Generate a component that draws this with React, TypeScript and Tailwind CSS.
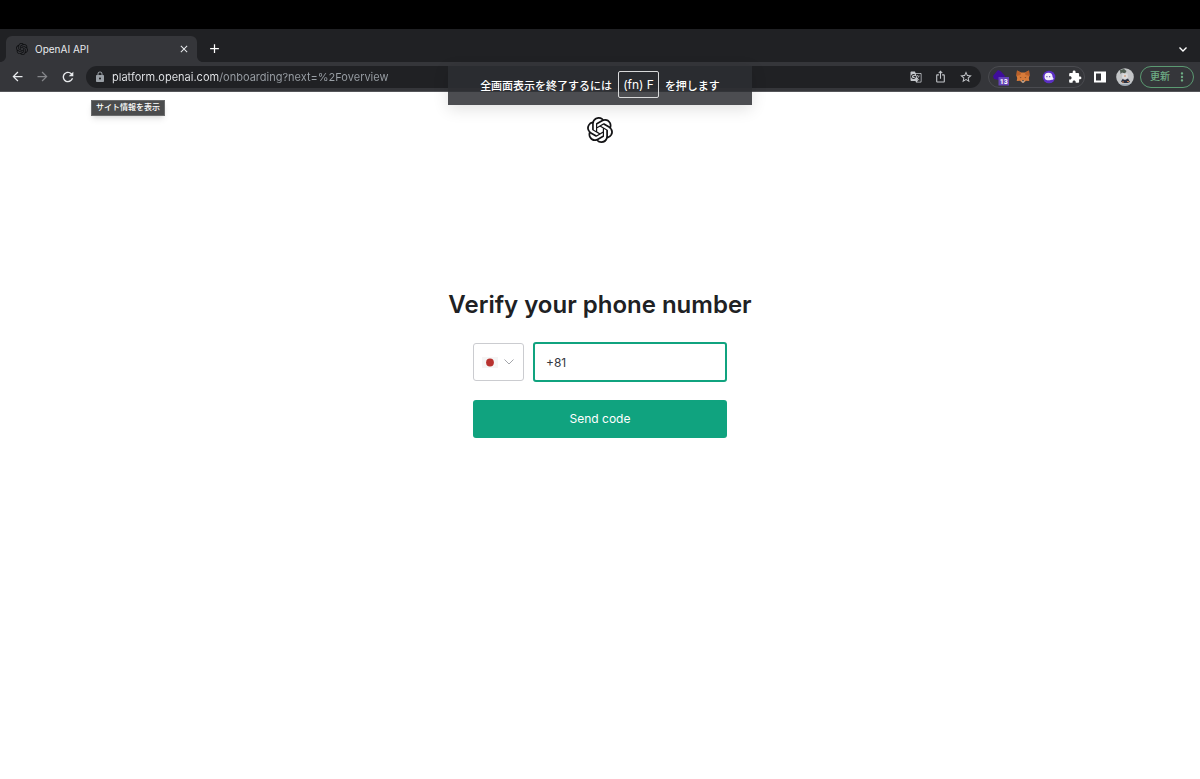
import { useState } from "react";
import { SiOpenai } from "react-icons/si";
import {
  MdArrowBack,
  MdArrowForward,
  MdRefresh,
  MdLock,
  MdGTranslate,
  MdOutlineIosShare,
  MdStarBorder,
  MdExtension,
  MdClose,
  MdAdd,
  MdMoreVert,
} from "react-icons/md";

function TabFlare({ flip = false }: { flip?: boolean }) {
  return (
    <svg viewBox="0 0 6 6" className={flip ? "size-1.5 -scale-x-100" : "size-1.5"} aria-hidden="true">
      <path d="M6 0V6H0C3.3 6 6 3.3 6 0Z" fill="#35363a" />
    </svg>
  );
}

function TabStrip() {
  return (
    <div className="flex h-[33px] items-end bg-[#202124] pr-2.5">
      <TabFlare />
      <div className="flex h-[26px] w-[191px] items-center rounded-t-md bg-[#35363a] pr-[7px] pl-2.5 text-[#e8eaed]">
        <SiOpenai className="size-3 text-[#0d0e10]" />
        <span className="ml-[7px] flex-1 font-[Inter,sans-serif] text-[10px] leading-4">OpenAI API</span>
        <button aria-label="Close tab" className="text-[#e8eaed]">
          <MdClose className="size-3" />
        </button>
      </div>
      <TabFlare flip />
      <button aria-label="New tab" className="mb-1.5 ml-1 text-white">
        <MdAdd className="size-[15px]" />
      </button>
      <button aria-label="Search tabs" className="mb-[7px] ml-auto text-white">
        <svg viewBox="0 0 14 12" className="h-3 w-3.5" fill="none" stroke="currentColor" strokeWidth="1.4">
          <path d="M3.5 4.5 7 8l3.5-3.5" />
        </svg>
      </button>
    </div>
  );
}

function WalletIcon() {
  return (
    <svg viewBox="0 0 18 18" className="size-[18px]" aria-hidden="true">
      <path d="M1 8 6 2l3 1.500L13 8l-2 4H6.500L2 11Z" fill="#3f0d9c" />
      <rect x="6.500" y="9" width="10.500" height="8.500" fill="#6744b8" />
      <text x="11.700" y="15.800" textAnchor="middle" fontSize="7" fontWeight="700" fill="#fff">
        13
      </text>
    </svg>
  );
}

function FoxIcon() {
  return (
    <svg viewBox="0 0 14 13" className="h-[13px] w-3.5" aria-hidden="true">
      <path d="M1 0.500 5 2.500h4l4-2 .6 5L12.800 8l.5 3-3.300-.2L8 12.500H6L4 10.800.700 11l.5-3L.400 5.500Z" fill="#d87b3a" />
      <path d="M1 .5 5 2.500 4.500 5 .500 6ZM13 .5 9 2.500 9.500 5 13.500 6Z" fill="#b9602a" />
      <path d="M3.500 6.800 5.500 7.500 4.800 8.300ZM10.500 6.800 8.500 7.500 9.200 8.300Z" fill="#6b4228" />
      <path d="M5.500 10.300h3L8 12.500H6Z" fill="#c9bfb6" />
      <path d="M6.200 10.300h1.600v1H6.200Z" fill="#2b2420" />
    </svg>
  );
}

function GhostIcon() {
  return (
    <svg viewBox="0 0 14 14" className="size-3.5" aria-hidden="true">
      <circle cx="7" cy="7" r="6.300" fill="#5b2fc4" />
      <path d="M2.500 6.700A4 3.900 0 0 1 10.500 6.600c0 1.100 1.200 1.600 1 2.300-.3.800-1.300.7-2.600 1-1.700.5-3.400.6-4.900-.2C2.900 9.100 2.500 8.100 2.500 6.700Z" fill="#f3eefc" />
      <circle cx="4.900" cy="6.700" r=".6" fill="#4a2a9c" />
      <circle cx="7.700" cy="6.700" r=".6" fill="#4a2a9c" />
    </svg>
  );
}

function AvatarIcon() {
  return (
    <svg viewBox="0 0 18 18" className="size-[18px]" aria-hidden="true">
      <clipPath id="avatar-clip">
        <circle cx="9" cy="9" r="8.800" />
      </clipPath>
      <g clipPath="url(#avatar-clip)">
        <rect width="18" height="18" fill="#c3c5c7" />
        <path d="M4 2 8 1l2.500 2L9 5.500 6 4.500 4.500 6Z" fill="#4d5b50" />
        <path d="M6.500 5.500h5l.5 4-3 2-3-2Z" fill="#dadbdc" />
        <path d="M5 13.500 6.500 11l2.500 1 3-1.500 2 3.500-2.500 1H7Z" fill="#2a2f40" />
        <circle cx="9" cy="8" r=".8" fill="#c8804e" />
        <path d="M6 13.500h2v1H6ZM11 13h2v1h-2Z" fill="#c8804e" />
        <path d="M1 15 5 16h8l4-2v4H1Z" fill="#9ca8b4" />
      </g>
    </svg>
  );
}

function Toolbar() {
  return (
    <div className="flex h-[30px] items-center border-b border-[#55565a] bg-[#35363a] pr-1.5 pl-2.5 text-[#e8eaed]">
      <div className="flex w-[76px] items-center gap-2.5">
        <button aria-label="Back">
          <MdArrowBack className="size-[15px]" />
        </button>
        <button aria-label="Forward" className="text-[#85868a]">
          <MdArrowForward className="size-[15px]" />
        </button>
        <button aria-label="Reload">
          <MdRefresh className="size-4" />
        </button>
      </div>
      <div className="flex h-[22px] flex-1 items-center rounded-full bg-[#202124] px-2">
        <button aria-label="サイト情報を表示" className="text-[#9aa0a6]">
          <MdLock className="size-3" />
        </button>
        <input
          aria-label="Address and search bar"
          defaultValue="platform.openai.com/onboarding?next=%2Foverview"
          spellCheck={false}
          className="ml-1.5 min-w-0 flex-1 bg-linear-to-r from-[#e8eaed] from-[108px] to-[#9aa0a6] to-[108px] bg-clip-text font-[Inter,sans-serif] text-[11px] leading-4 text-transparent caret-white outline-none"
        />
        <div className="flex items-center gap-3 text-[#c4c7cb]">
          <button aria-label="Translate this page">
            <MdGTranslate className="size-3" />
          </button>
          <button aria-label="Share">
            <MdOutlineIosShare className="size-[13px]" />
          </button>
          <button aria-label="Bookmark">
            <MdStarBorder className="size-3.5" />
          </button>
        </div>
      </div>
      <div className="ml-[7px] flex h-[22px] w-[97px] items-center gap-3 rounded-full border border-[#4a4b50] pl-[3px]">
        <button aria-label="Wallet, 13 notifications" className="-mr-1.5">
          <WalletIcon />
        </button>
        <button aria-label="Fox extension">
          <FoxIcon />
        </button>
        <button aria-label="Ghost extension">
          <GhostIcon />
        </button>
        <button aria-label="Extensions" className="text-white">
          <MdExtension className="size-3.5" />
        </button>
      </div>
      <button aria-label="Side panel" className="ml-2 text-white">
        <svg viewBox="0 0 14 14" className="size-3.5">
          <path d="M1 1.500h12v11H1Zm2 2v7h5v-7Z" fill="currentColor" fillRule="evenodd" />
        </svg>
      </button>
      <button aria-label="Profile" className="ml-[9px]">
        <AvatarIcon />
      </button>
      <button className="ml-1.5 flex h-[22px] w-[54px] items-center justify-between rounded-full border border-[#5b9a72] pr-1 pl-[9px] text-[10px] font-medium text-[#6fae86]">
        更新
        <MdMoreVert className="size-3.5" />
      </button>
    </div>
  );
}

function FullscreenNotice() {
  return (
    <div className="absolute top-[66px] left-1/2 flex h-[39px] w-[304px] -translate-x-1/2 items-center justify-center gap-1.5 bg-[#2d2e32]/85 pb-0.5 font-['Noto_Sans_CJK_JP',sans-serif] text-[11px] leading-4 font-medium text-white shadow-[0_4px_16px_rgba(0,0,0,0.12)]">
      <span>全画面表示を終了するには</span>
      <kbd className="flex h-[27px] items-center rounded-xs border border-[#d8d9da] px-1 font-[Inter,sans-serif] text-[12px] font-normal whitespace-nowrap">
        (fn) F
      </kbd>
      <span>を押します</span>
    </div>
  );
}

function CountrySelect() {
  const [country, setCountry] = useState("JP");
  return (
    <div className="relative flex h-[38px] w-[51px] items-center gap-[5px] rounded-[3px] border border-[#cbccd0] pl-2 focus-within:border-[#10a37f]">
      <svg viewBox="0 0 16 11" className="h-[11px] w-4" aria-hidden="true">
        <rect width="16" height="11" fill="#f5f5f5" />
        <circle cx="8" cy="5.500" r="3.900" fill="#b8322f" />
      </svg>
      <svg viewBox="0 0 12 12" className="size-3" fill="none" stroke="#a4a6ab" aria-hidden="true">
        <path d="M1.500 3.500 6 8l4.500-4.500" />
      </svg>
      <select
        aria-label="Country"
        value={country}
        onChange={(e) => setCountry(e.target.value)}
        className="absolute inset-0 size-full cursor-pointer opacity-0"
      >
        <option value="JP">+81</option>
      </select>
    </div>
  );
}

export default function App() {
  const [phone, setPhone] = useState("+81");
  return (
    <div className="relative min-h-screen bg-white font-[Roboto,'Noto_Sans_CJK_JP',sans-serif]">
      <header className="bg-black pt-[29px]">
        <TabStrip />
        <Toolbar />
      </header>
      <div
        role="tooltip"
        className="absolute top-[100px] left-[91px] flex h-4 items-center border border-[#6a6b6c] bg-[#4b4c4d] px-1 text-[8px] font-medium whitespace-nowrap text-white shadow-md"
      >
        サイト情報を表示
      </div>
      <FullscreenNotice />

      <main className="flex flex-col items-center px-4 pt-[25px] font-[Inter,sans-serif]">
        <SiOpenai className="size-[26px] text-[#141416]" title="OpenAI" />
        <h1 className="mt-[144px] text-center text-[24px] leading-9 font-semibold text-[#202123]">
          Verify your phone number
        </h1>
        <form className="mt-[19px] w-full max-w-[254px]" onSubmit={(e) => e.preventDefault()}>
          <div className="flex items-center gap-[9px]">
            <CountrySelect />
            <input
              type="tel"
              aria-label="Phone number"
              value={phone}
              onChange={(e) => setPhone(e.target.value)}
              className="h-10 min-w-0 flex-1 rounded-[3px] border-2 border-[#10a37f] px-[11px] text-[12px] text-[#353740] outline-none"
            />
          </div>
          <button type="submit" className="mt-[18px] h-[38px] w-full rounded-[3px] bg-[#10a37f] text-[12px] text-white">
            Send code
          </button>
        </form>
      </main>
    </div>
  );
}
